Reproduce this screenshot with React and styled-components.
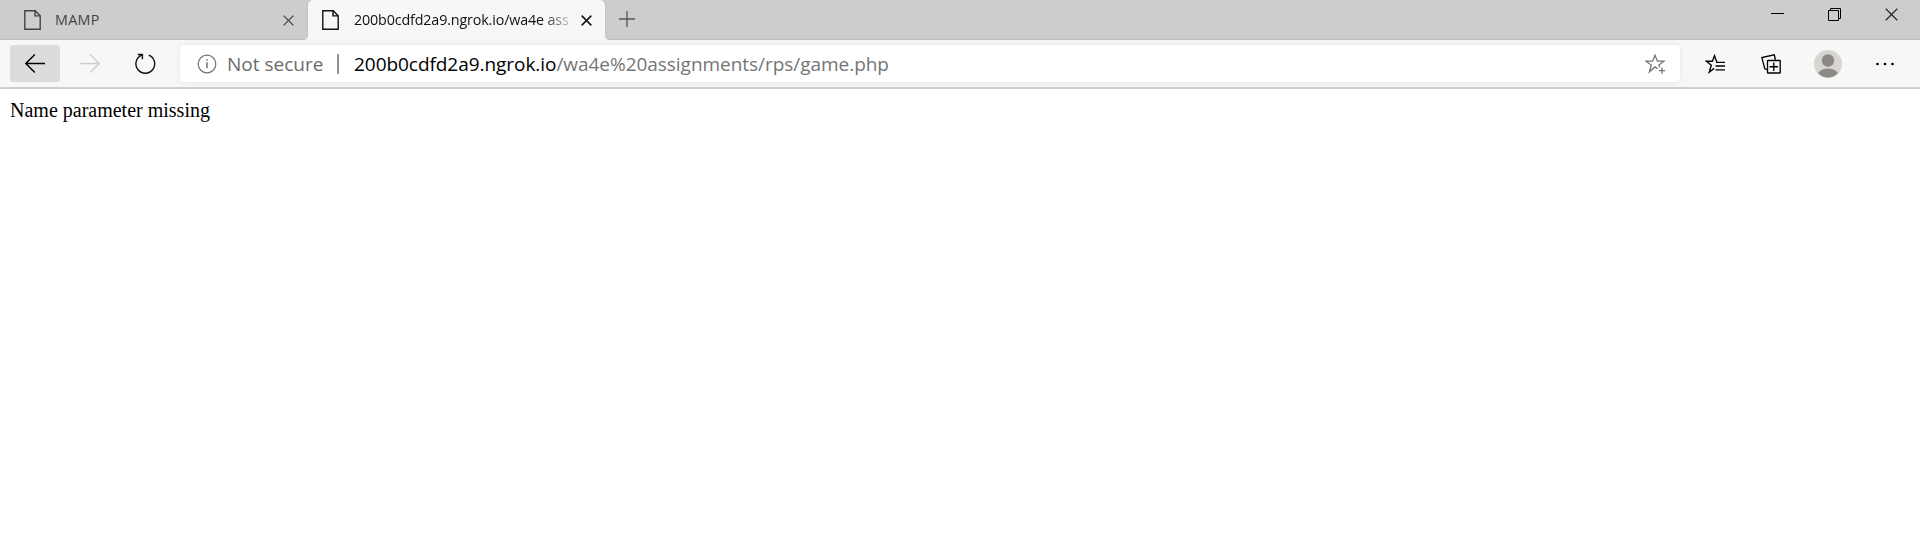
import React from 'react';
import styled, { createGlobalStyle } from 'styled-components';

const GlobalStyle = createGlobalStyle`
  * { box-sizing: border-box; }
  body { margin: 0; background: #fff; overflow: hidden; }
`;

const Browser = styled.div`
  display: flex;
  flex-direction: column;
  height: 539px;
  font-family: "Open Sans", "Noto Sans", sans-serif;
  background: #fff;
`;

const TabStrip = styled.header`
  display: flex;
  height: 40px;
  background: #cdcdcd;
  box-shadow: inset 0 -2px 1px -1px #bdbdbd;
`;

const Tab = styled.div`
  position: relative;
  display: flex;
  align-items: center;
  height: 40px;
  width: ${(p) => (p.$active ? 297 : 308)}px;
  padding-left: ${(p) => (p.$active ? 14 : 24)}px;
  color: ${(p) => (p.$active ? '#111' : '#444')};
  background: ${(p) => (p.$active ? '#f7f7f7' : 'transparent')};
  border-radius: 5px 5px 0 0;
  box-shadow: ${(p) => (p.$active ? '0 0 2px #aaa' : 'none')};
  clip-path: ${(p) => (p.$active ? 'inset(0 -6px 0 -6px)' : 'none')};
`;

const TabFlare = styled.svg`
  position: absolute;
  bottom: 0;
  ${(p) => (p.$right ? 'right: -5px; transform: scaleX(-1);' : 'left: -5px;')}
`;

const TabTitle = styled.span`
  width: ${(p) => (p.$fade ? 220 : 216)}px;
  margin-left: ${(p) => (p.$fade ? 15 : 14)}px;
  white-space: nowrap;
  font-size: 14.3px;
  line-height: 20px;
  letter-spacing: ${(p) => p.$spacing};
  mask-image: ${(p) => (p.$fade ? 'linear-gradient(90deg, #000 188px, transparent 222px)' : 'none')};
`;

const TabClose = styled.span`
  display: flex;
  margin-left: ${(p) => (p.$active ? 7 : 12)}px;
`;

const NewTab = styled.div`
  display: flex;
  align-items: center;
  margin-left: 14px;
  height: 38px;
`;

const WindowControls = styled.div`
  display: flex;
  margin-left: auto;
  margin-right: 22px;
  padding-top: 8px;
  gap: 44px;
`;

const Toolbar = styled.nav`
  display: flex;
  height: 49px;
  padding: 5px 0 0 10px;
  background: #f7f7f7;
  border-bottom: 2px solid #cfcfcf;
`;

const NavButton = styled.div`
  display: flex;
  align-items: center;
  justify-content: center;
  width: 50px;
  height: 37px;
  margin-right: ${(p) => p.$gap}px;
  border-radius: 3px;
  background: ${(p) => (p.$hover ? '#dcdcdc' : 'transparent')};
`;

const AddressBar = styled.div`
  display: flex;
  align-items: center;
  width: 1500px;
  height: 37px;
  padding-left: 17px;
  padding-right: 14px;
  border-radius: 4px;
  background: #fff;
  box-shadow: 0 0 6px rgba(0, 0, 0, 0.07);
  font-size: 19px;
  line-height: 28px;
  white-space: nowrap;
`;

const Security = styled.span`
  width: 97px;
  margin-left: 10px;
  color: #6c6c6c;
`;

const Divider = styled.span`
  width: 2px;
  height: 20px;
  margin: 0 15px 0 13px;
  background: #929292;
`;

const Host = styled.span`
  color: #000;
  letter-spacing: -0.05px;
`;

const Path = styled.span`
  flex: 1;
  color: #757575;
  letter-spacing: -0.04px;
`;

const Actions = styled.div`
  display: flex;
  align-items: center;
  height: 37px;
  margin-left: 25px;
`;

const Action = styled.span`
  display: flex;
  margin-right: ${(p) => p.$gap}px;
`;

const Page = styled.main`
  flex: 1;
  padding: 10px;
  font-family: "Liberation Serif", serif;
  font-size: 20px;
  line-height: 23px;
  color: #000;
`;

const FileIcon = ({ color }) => (
  <svg width="17" height="20" viewBox="0 0 17 20" fill="none" stroke={color} strokeWidth="1.4">
    <path d="M.8.8h10.4l5 5v13.4H.8z M11 .8v5.1h5.2" />
  </svg>
);

const CrossIcon = ({ size, color, stroke = 1.3 }) => (
  <svg width={size} height={size} viewBox="0 0 12 12" fill="none" stroke={color} strokeWidth={(stroke * 12) / size}>
    <path d="M.7.7l10.6 10.6M11.3.7L.7 11.3" />
  </svg>
);

const ArrowIcon = ({ color, flip }) => (
  <svg width="20" height="19" viewBox="0 0 20 19" fill="none" stroke={color} strokeWidth="1.4">
    <path d={flip ? 'M0 9.5h19M10.2.6l9 8.9-9 8.9' : 'M20 9.5H1M9.8.6l-9 8.9 9 8.9'} />
  </svg>
);

const ReloadIcon = () => (
  <svg width="22" height="22" viewBox="0 0 22 22" fill="none" stroke="#111" strokeWidth="1.4">
    <path d="M14.8 2.1A9.4 9.4 0 1 1 7.8 2.1M3.7 1.5h4.7v4.8" />
  </svg>
);

const InfoIcon = () => (
  <svg width="20" height="20" viewBox="0 0 20 20" fill="none" stroke="#737373" strokeWidth="1.2">
    <circle cx="10" cy="10" r="8.8" />
    <path d="M10 8.2v6M10 5.2v1.5" strokeWidth="1.5" />
  </svg>
);

const StarPlusIcon = () => (
  <svg width="21" height="21" viewBox="0 0 21 21" fill="none" stroke="#757575" strokeWidth="1.3">
    <path d="M12.6 15.8L10 13.9l-5.6 4.9L6.3 12 .9 8.2h6.7L10 2.2l2.4 6h6.5L13.9 12l.8 2.4" />
    <path d="M17 14.5v6.2M13.9 17.6h6.2" />
  </svg>
);

const FavoritesIcon = () => (
  <svg width="20" height="20" viewBox="0 0 20 20" fill="none" stroke="#000" strokeWidth="1.35">
    <path d="M12.2 7.3l-.8-.3L9.5 1.7 7.4 7.2H1.3l5 4-2.1 7 4.9-3.8" />
    <path d="M11 8.3h9M10.5 12h9.5M10.5 15.8h9.5" />
  </svg>
);

const CollectionsIcon = () => (
  <svg width="20" height="20" viewBox="0 0 20 20" fill="none" stroke="#000" strokeWidth="1.35">
    <rect x="6.5" y="6.5" width="12.7" height="12.5" rx=".5" />
    <path d="M12.8 8.5v8.5M8.5 12.7h8.5M6 15.6l-2.2-.8L.9 3.6 13.3.9l1.1 5" />
  </svg>
);

const AvatarIcon = () => (
  <svg width="28" height="28" viewBox="0 0 28 28">
    <clipPath id="avatar"><circle cx="14" cy="14" r="13.4" /></clipPath>
    <circle cx="14" cy="14" r="14" fill="#d6d5d1" />
    <circle cx="14" cy="10.5" r="6.2" fill="#8b8885" />
    <ellipse cx="14" cy="26" rx="10.8" ry="7.5" fill="#8b8885" clipPath="url(#avatar)" />
  </svg>
);

const MoreIcon = () => (
  <svg width="20" height="4" viewBox="0 0 20 4">
    <circle cx="2.5" cy="2" r="1.35" /><circle cx="10" cy="2" r="1.35" /><circle cx="17.5" cy="2" r="1.35" />
  </svg>
);

const Flare = ({ right }) => (
  <TabFlare $right={right} width="5" height="5" viewBox="0 0 5 5">
    <path d="M5 0Q5 5 0 5H5z" fill="#f7f7f7" />
  </TabFlare>
);

export default function App() {
  return (
    <Browser>
      <GlobalStyle />
      <TabStrip>
        <Tab>
          <FileIcon color="#444" />
          <TabTitle $spacing="0.35px">MAMP</TabTitle>
          <TabClose><CrossIcon size={11} color="#444" /></TabClose>
        </Tab>
        <Tab $active>
          <Flare />
          <FileIcon color="#111" />
          <TabTitle $fade $spacing="-0.14px">200b0cdfd2a9.ngrok.io/wa4e ass</TabTitle>
          <TabClose $active><CrossIcon size={11} color="#111" stroke={1.5} /></TabClose>
          <Flare right />
        </Tab>
        <NewTab>
          <svg width="16" height="16" viewBox="0 0 16 16" stroke="#555" strokeWidth="1.3"><path d="M8 0v16M0 8h16" /></svg>
        </NewTab>
        <WindowControls>
          <svg width="13" height="13" viewBox="0 0 13 13"><path d="M0 5h13v1H0z" /></svg>
          <svg width="13" height="13" viewBox="0 0 13 13" fill="none" stroke="#000"><path d="M.5 2.5h10v10H.5zM2.5 2.5v-2h10v10h-2" /></svg>
          <CrossIcon size={13} color="#222" stroke={1.1} />
        </WindowControls>
      </TabStrip>
      <Toolbar>
        <NavButton $hover $gap={5}><ArrowIcon color="#000" /></NavButton>
        <NavButton $gap={5}><ArrowIcon flip color="#cfcfcf" /></NavButton>
        <NavButton $gap={10}><ReloadIcon /></NavButton>
        <AddressBar>
          <InfoIcon />
          <Security>Not secure</Security>
          <Divider />
          <Host>200b0cdfd2a9.ngrok.io</Host>
          <Path>/wa4e%20assignments/rps/game.php</Path>
          <StarPlusIcon />
        </AddressBar>
        <Actions>
          <Action $gap={36}><FavoritesIcon /></Action>
          <Action $gap={33}><CollectionsIcon /></Action>
          <Action $gap={33}><AvatarIcon /></Action>
          <Action $gap={0}><MoreIcon /></Action>
        </Actions>
      </Toolbar>
      <Page>Name parameter missing</Page>
    </Browser>
  );
}
